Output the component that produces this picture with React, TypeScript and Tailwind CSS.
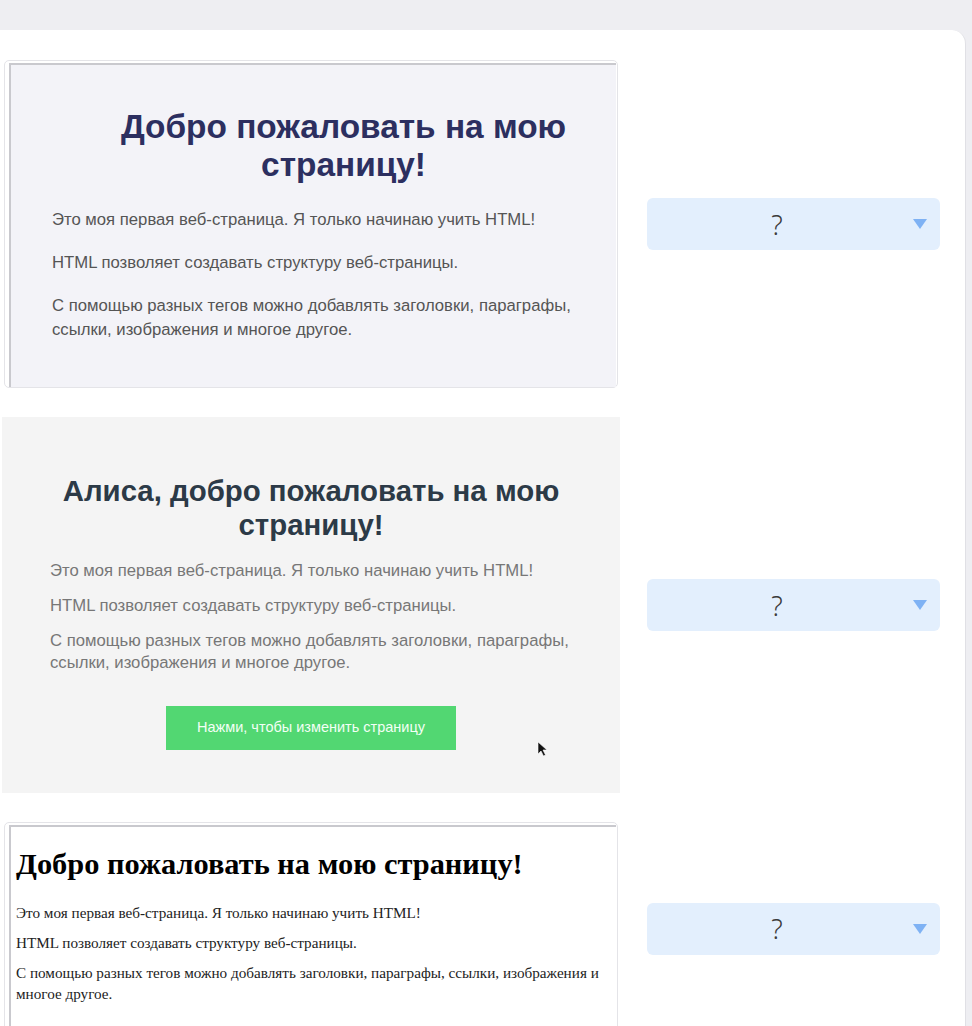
import type { ReactNode } from "react";

const sans = "font-['Liberation_Sans',Arial,sans-serif]";

function Pick() {
  return (
    <div className="ml-[25px] flex h-[52px] w-[293px] items-center rounded-[6px] bg-[#e3effd]">
      <span className="flex-1 pr-[6px] text-center font-['Noto_Sans',sans-serif] text-[27px] font-light leading-none text-[#3b3b3b]">
        ?
      </span>
      <svg width="14" height="10" viewBox="0 0 14 10" className="mr-[13px]">
        <path d="M0 0h14L7 10z" fill="#7fb2f4" />
      </svg>
    </div>
  );
}

function Row({ children }: { children: ReactNode }) {
  return (
    <div className="flex items-center">
      <div className="w-[622px] shrink-0">{children}</div>
      <Pick />
    </div>
  );
}

function Framed({ bg, children }: { bg: string; children: ReactNode }) {
  return (
    <div className="ml-[4px] w-[614px] rounded-[5px] border border-[#e4e4e8] bg-white pl-[4px] pr-[1px] pt-[2px]">
      <div className={`border-l-2 border-t-2 border-[#c9c9ce] ${bg}`}>{children}</div>
    </div>
  );
}

function Cursor() {
  return (
    <svg width="10" height="16" viewBox="0 0 10 16" className="absolute left-[535px] top-[324px]">
      <path d="M1 1v12l3-3 2.5 5 2-1-2.5-5H10z" fill="#111" stroke="#fff" strokeWidth="0.6" />
    </svg>
  );
}

export default function App() {
  return (
    <div className="min-h-screen bg-[#eeeef2] pt-[30px]">
      <div className="mr-[6px] min-h-[996px] rounded-tr-[14px] border-r border-[#e0e0e5] bg-white pt-[30px]">
        <div className="flex flex-col gap-[29px]">
          <Row>
            <Framed bg="bg-[#f3f3f8]">
              <div className={`${sans} px-[41px] pb-[45px] pt-[43px]`}>
                <h1 className="pl-[60px] text-center text-[33.4px] font-bold leading-[38px] text-[#2c2f60]">
                  Добро пожаловать на мою страницу!
                </h1>
                <div className="mt-[24px] flex flex-col gap-[19px] text-[16.7px] leading-[24px] text-[#555]">
                  <p>Это моя первая веб-страница. Я только начинаю учить HTML!</p>
                  <p>HTML позволяет создавать структуру веб-страницы.</p>
                  <p>
                    С помощью разных тегов можно добавлять заголовки, параграфы,
                    ссылки, изображения и многое другое.
                  </p>
                </div>
              </div>
            </Framed>
          </Row>

          <Row>
            <div className={`${sans} relative ml-[2px] w-[618px] bg-[#f4f4f4] px-[48px] pb-[43px] pt-[57px]`}>
              <h1 className="text-center text-[29.4px] font-bold leading-[34px] text-[#2c3a47]">
                Алиса, добро пожаловать на мою страницу!
              </h1>
              <div className="mt-[18px] flex flex-col gap-[13px] text-[16.7px] leading-[22px] text-[#777]">
                <p>Это моя первая веб-страница. Я только начинаю учить HTML!</p>
                <p>HTML позволяет создавать структуру веб-страницы.</p>
                <p>
                  С помощью разных тегов можно добавлять заголовки, параграфы,
                  ссылки, изображения и многое другое.
                </p>
              </div>
              <div className="mt-[32px] flex justify-center">
                <button className="h-[44px] w-[290px] bg-[#52d772] text-[14.5px] text-[#f2fff5]">
                  Нажми, чтобы изменить страницу
                </button>
              </div>
              <Cursor />
            </div>
          </Row>

          <Row>
            <Framed bg="bg-white">
              <div className="px-[5px] pb-[30px] pt-[19px] font-['Liberation_Serif','Times_New_Roman',serif] text-black">
                <h1 className="text-[30.4px] font-bold leading-[37px]">
                  Добро пожаловать на мою страницу!
                </h1>
                <div className="mt-[19px] flex flex-col gap-[9px] text-[15.2px] leading-[21px] text-[#222]">
                  <p>Это моя первая веб-страница. Я только начинаю учить HTML!</p>
                  <p>HTML позволяет создавать структуру веб-страницы.</p>
                  <p>
                    С помощью разных тегов можно добавлять заголовки, параграфы, ссылки, изображения и
                    многое другое.
                  </p>
                </div>
              </div>
            </Framed>
          </Row>
        </div>
      </div>
    </div>
  );
}
